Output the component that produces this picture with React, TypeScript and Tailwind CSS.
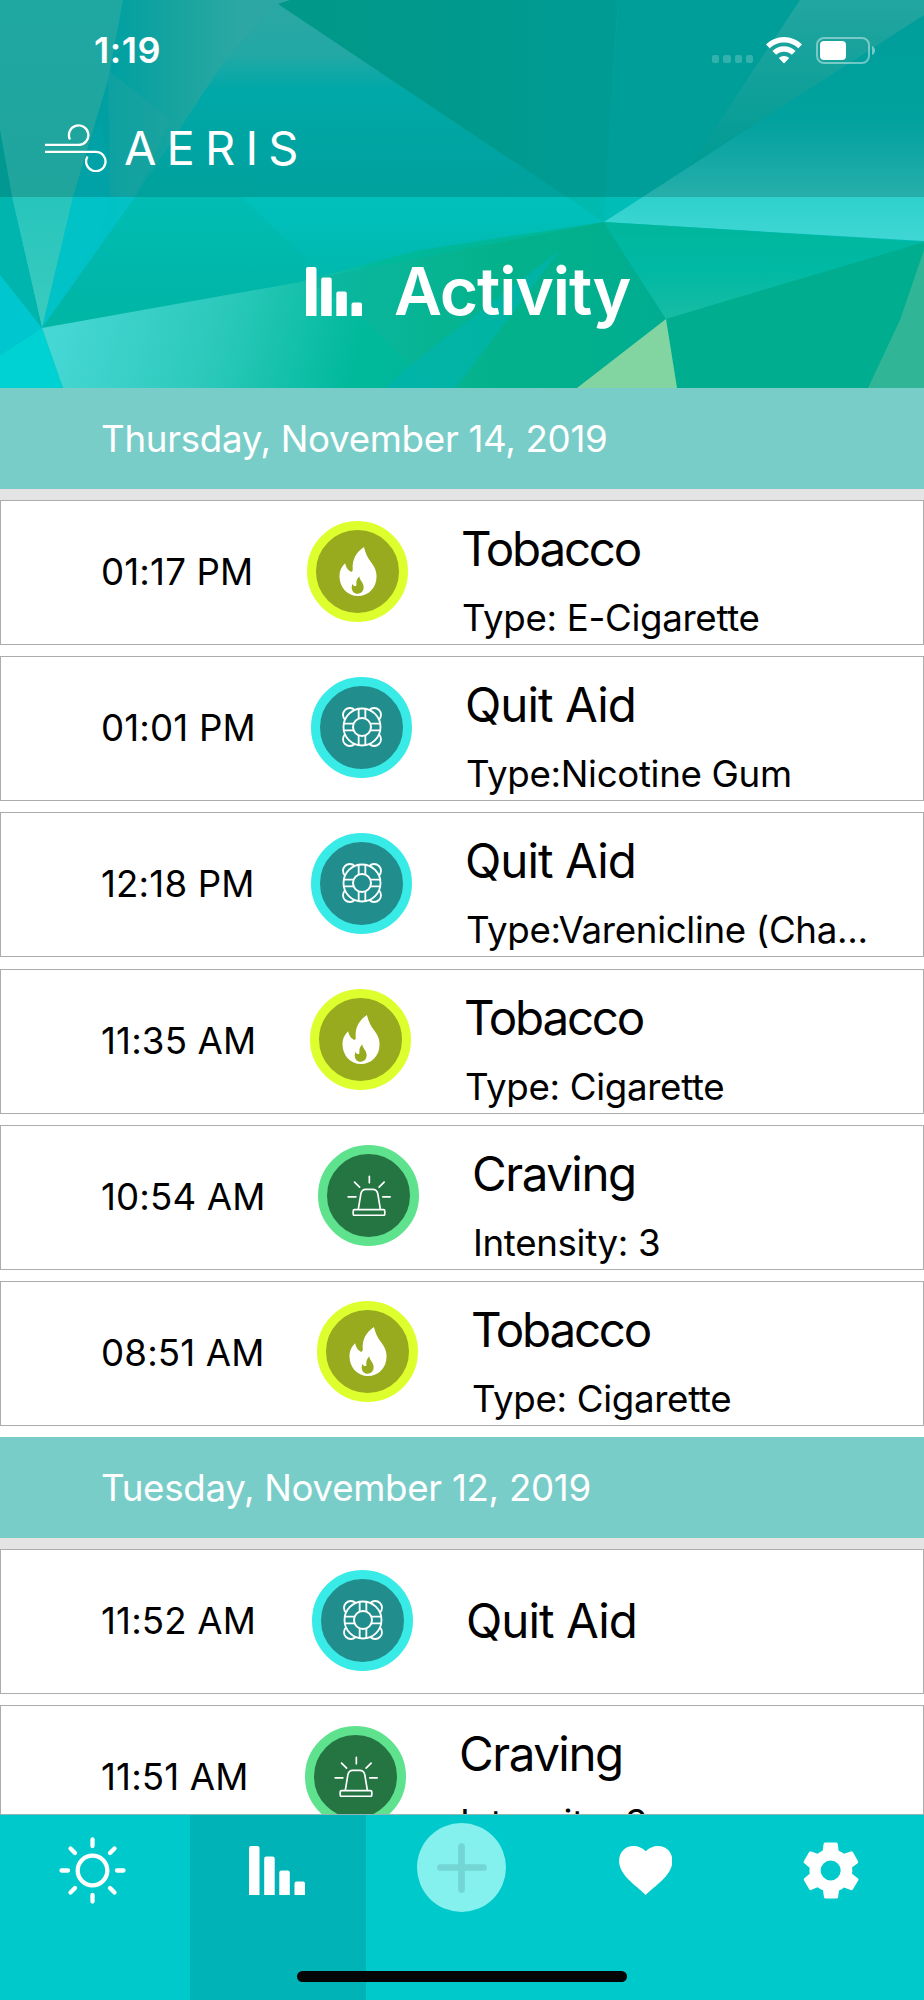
import type { ReactNode } from 'react';
import { clsx } from 'clsx';

type EntryKind = 'tobacco' | 'quitAid' | 'craving';

interface Entry {
  time: string;
  kind: EntryKind;
  detail?: string;
  timeWidth: string;
}

interface Day {
  date: string;
  entries: Entry[];
}

const days: Day[] = [
  {
    date: 'Thursday, November 14, 2019',
    entries: [
      { time: '01:17 PM', kind: 'tobacco', detail: 'Type: E-Cigarette', timeWidth: 'w-[206px]' },
      { time: '01:01 PM', kind: 'quitAid', detail: 'Type:Nicotine Gum', timeWidth: 'w-[210px]' },
      { time: '12:18 PM', kind: 'quitAid', detail: 'Type:Varenicline (Cha...', timeWidth: 'w-[210px]' },
      { time: '11:35 AM', kind: 'tobacco', detail: 'Type: Cigarette', timeWidth: 'w-[209px]' },
      { time: '10:54 AM', kind: 'craving', detail: 'Intensity: 3', timeWidth: 'w-[217px]' },
      { time: '08:51 AM', kind: 'tobacco', detail: 'Type: Cigarette', timeWidth: 'w-[216px]' },
    ],
  },
  {
    date: 'Tuesday, November 12, 2019',
    entries: [
      { time: '11:52 AM', kind: 'quitAid', timeWidth: 'w-[211px]' },
      { time: '11:51 AM', kind: 'craving', detail: 'Intensity: 3', timeWidth: 'w-[204px]' },
    ],
  },
];

function FlameIcon() {
  return (
    <svg viewBox="0 0 114 148" className="h-[49px] w-[38px]">
      <path
        fill="white"
        d="M75 0C79 16 85 32 97 47C106 59 113 71 113 89C113 124 88 148 57 148C26 148 1 122 1 88C1 72 7 59 18 49C20 58 25 69 34 74C39 76 42 73 41 66C39 38 52 15 75 0Z"
      />
      <path
        fill="#98ab1f"
        d="M61 89C62 101 75 108 74 123C73 134 66 141 56 141C45 141 38 133 38 122C38 118 39 114 41 111C42 117 46 119 50 118C53 117 52 113 52 108C52 101 55 94 61 89Z"
      />
    </svg>
  );
}

function LifebuoyIcon() {
  return (
    <svg viewBox="0 0 120 120" className="size-10" fill="none" stroke="white" strokeWidth="5.500">
      <circle cx="60" cy="60" r="55.500" />
      <circle cx="60" cy="60" r="27" strokeWidth="6" />
      <path d="M50 5V35M70 5V35M50 85V115M70 85V115M5 50H35M5 70H35M85 50H115M85 70H115" />
      <path d="M9 38A18 18 0 1 1 38 9M82 9A18 18 0 1 1 111 38M9 82A18 18 0 1 0 38 111M82 111A18 18 0 1 0 111 82" />
    </svg>
  );
}

function SirenIcon() {
  return (
    <svg viewBox="0 0 130 122" className="h-[41px] w-[44px]" fill="none" stroke="white" strokeWidth="5">
      <path d="M33 103L41 55C43 47 48 43 55 43H76C84 43 89 47 91 55L99 103" />
      <rect x="18" y="103" width="94" height="17" rx="4" />
      <path strokeLinecap="round" d="M66 4V23M22 21L37 36M110 21L95 36M3 65H26M106 65H128" />
    </svg>
  );
}

interface KindStyle {
  label: string;
  circle: string;
  tracking: string;
  icon: ReactNode;
}

const kinds: Record<EntryKind, KindStyle> = {
  tobacco: {
    label: 'Tobacco',
    circle: 'border-[#deff2e] bg-[#98ab1f]',
    tracking: 'tracking-[-0.046em]',
    icon: <FlameIcon />,
  },
  quitAid: {
    label: 'Quit Aid',
    circle: 'border-[#38ebe7] bg-[#218e8d]',
    tracking: 'tracking-[-0.020em]',
    icon: <LifebuoyIcon />,
  },
  craving: {
    label: 'Craving',
    circle: 'border-[#5fe28e] bg-[#257543]',
    tracking: 'tracking-[-0.031em]',
    icon: <SirenIcon />,
  },
};

function BarsIcon() {
  return (
    <svg viewBox="0 0 56 49" className="h-[49px] w-[56px]" fill="white">
      <path d="M0 49V2Q0 0 2 0H8.500Q10.500 0 10.500 2V49ZM15.200 49V12.500Q15.200 10.500 17.200 10.500H23.700Q25.700 10.500 25.700 12.500V49ZM30.300 49V26.500Q30.300 24.500 32.300 24.500H38.800Q40.800 24.500 40.800 26.500V49ZM45.500 49V37.500Q45.500 35.500 47.500 35.500H54Q56 35.500 56 37.500V49Z" />
    </svg>
  );
}

function Backdrop() {
  return (
    <svg viewBox="0 0 924 388" className="absolute inset-0 h-[388px] w-[924px]" preserveAspectRatio="none">
      <defs>
        <linearGradient id="sky" x1="0" y1="0" x2="0" y2="1">
          <stop offset="0" stopColor="#34c8c5" />
          <stop offset=".14" stopColor="#2ac9c5" />
          <stop offset=".23" stopColor="#00c9c8" />
          <stop offset=".55" stopColor="#00bfba" />
          <stop offset=".75" stopColor="#00b6aa" />
          <stop offset="1" stopColor="#00b698" />
        </linearGradient>
        <linearGradient id="left" gradientUnits="userSpaceOnUse" x1="110" y1="60" x2="240" y2="60">
          <stop offset="0" stopColor="#00bfc1" />
          <stop offset=".5" stopColor="#1cc4be" />
          <stop offset="1" stopColor="#35c8c4" />
        </linearGradient>
        <linearGradient id="low" gradientUnits="userSpaceOnUse" x1="60" y1="310" x2="400" y2="395">
          <stop offset="0" stopColor="#46d7d4" />
          <stop offset=".45" stopColor="#2cc9bb" />
          <stop offset=".85" stopColor="#00b99b" />
          <stop offset="1" stopColor="#00b799" />
        </linearGradient>
        <linearGradient id="dark" x1="0" y1="0" x2="1" y2="0">
          <stop offset="0" stopColor="#00b6a2" />
          <stop offset=".5" stopColor="#00b7a8" />
          <stop offset="1" stopColor="#00bab1" />
        </linearGradient>
        <linearGradient id="right" x1="0" y1="0" x2="0" y2="1">
          <stop offset="0" stopColor="#00bdb9" />
          <stop offset=".45" stopColor="#00c0bd" />
          <stop offset=".8" stopColor="#2ed0cb" />
          <stop offset="1" stopColor="#40d7d4" />
        </linearGradient>
        <linearGradient id="mid" x1="0" y1="0" x2="1" y2="0">
          <stop offset="0" stopColor="#0cb8a2" />
          <stop offset=".55" stopColor="#03b28b" />
          <stop offset="1" stopColor="#00ad91" />
        </linearGradient>
        <linearGradient id="facet" x1="0" y1="0" x2="0" y2="1">
          <stop offset="0" stopColor="#00b69c" />
          <stop offset=".5" stopColor="#00b9a5" />
          <stop offset="1" stopColor="#18bca2" />
        </linearGradient>
        <linearGradient id="streak" x1="0" y1="0" x2="0" y2="1">
          <stop offset="0" stopColor="#34c8c2" />
          <stop offset="1" stopColor="#00b9ae" />
        </linearGradient>
        <linearGradient id="shard" x1="0" y1="0" x2="0" y2="1">
          <stop offset="0" stopColor="#25c7c1" />
          <stop offset=".6" stopColor="#27c5bc" />
          <stop offset="1" stopColor="#3bcbc0" />
        </linearGradient>
      </defs>
      <rect width="924" height="388" fill="url(#sky)" />
      <path fill="#00b7a5" d="M135 197H242L312 265L300 290L42 328Z" opacity=".4" />
      <path fill="url(#left)" d="M123 0H279L225 60L135 197L42 328L73 197Z" />
      <path fill="#00c3c8" d="M73 197L100 120L110 170L110 197L100 240L42 328Z" opacity=".8" />
      <path fill="#00c3c8" d="M110 197H135L42 328L100 240Z" opacity=".6" />
      <path fill="#2cc4bd" d="M108 70L170 120L135 197L110 197Z" opacity=".4" />
      <path fill="url(#shard)" d="M0 0H123L108 80L73 197L42 328L12 197L0 130Z" />
      <path fill="#00b5ad" d="M0 130L12 197L42 328L0 275Z" />
      <path fill="#00c7cf" d="M0 275L42 328L0 355Z" />
      <path fill="#00d1d2" d="M0 355L42 328L63 388H0Z" />
      <path fill="url(#low)" d="M42 328L300 282L420 250L604 222L577 388H63Z" />
      <path fill="url(#mid)" d="M306 280Q450 252 604 222L666 319L577 388H433L360 315Z" />
      <path fill="#00b4aa" d="M385 388L410 365L560 250L500 330L455 388Z" opacity=".8" />
      <path fill="url(#dark)" d="M278 4L290 0H618L604 222Z" />
      <path fill="#00bdb7" d="M618 0H924V15L604 222Z" />
      <path fill="url(#streak)" d="M800 0H924V15L690 166Z" opacity=".8" />
      <path fill="url(#right)" d="M924 15V241L604 222Z" />
      <path fill="url(#facet)" d="M604 222L924 242L666 319Z" />
      <path fill="#00ae8f" d="M666 319L924 242V388H677Z" />
      <path fill="#30b597" d="M924 250V388H868L900 320Z" />
      <path fill="#82d4a1" d="M666 319L677 388H577Z" />
    </svg>
  );
}

function StatusBar() {
  return (
    <div className="flex h-[100px] items-center justify-between pr-[49px] pl-[94px]">
      <span className="text-[36px] font-semibold tracking-[0.015em]">1:19</span>
      <div className="flex items-center">
        <div className="mt-[18px] mr-[13px] flex gap-1">
          {[0, 1, 2, 3].map((dot) => (
            <span key={dot} className="size-[7.200px] rounded-[2px] bg-white/20" />
          ))}
        </div>
        <svg viewBox="0 0 36 27" className="mr-[14px] h-[27px] w-[36px]" fill="white">
          <path d="M18 0C25 0 31 2.800 36 7.500L32.300 11.300C28.400 7.500 23.500 5.500 18 5.500S7.600 7.500 3.700 11.300L0 7.500C5 2.800 11 0 18 0Z" />
          <path d="M18 9.300C22.500 9.300 26.500 11 29.600 14L25.800 17.700C23.700 15.800 21 14.700 18 14.700S12.300 15.800 10.200 17.700L6.400 14C9.500 11 13.500 9.300 18 9.300Z" />
          <path d="M18 19C20 19 21.800 19.700 23.200 21L18 26.500L12.800 21C14.200 19.700 16 19 18 19Z" />
        </svg>
        <svg viewBox="0 0 59 27" className="h-[27px] w-[59px]">
          <rect x="1" y="1" width="52" height="25" rx="7" fill="none" stroke="white" strokeWidth="2" opacity=".42" />
          <rect x="4" y="4" width="26" height="19" rx="4" fill="white" />
          <path d="M56 9Q59 10.500 59 13.500T56 18Z" fill="white" opacity=".45" />
        </svg>
      </div>
    </div>
  );
}

function Header() {
  return (
    <header className="relative h-[388px] shrink-0 text-white">
      <Backdrop />
      <div className="relative h-[197px] bg-black/16">
        <StatusBar />
        <div className="flex h-[95px] items-center pl-[45px]">
          <svg viewBox="0 0 62 48" className="h-12 w-[62px]" fill="none" stroke="white" strokeWidth="2.300">
            <path d="M0 20.800H34A9.700 9.700 0 1 0 25 15.500" />
            <path d="M0 27.800H51A9.700 9.700 0 1 1 42.500 32.500" />
          </svg>
          <h1 className="pt-[1px] pl-[17px] text-[47px] tracking-[0.216em]">AERIS</h1>
        </div>
      </div>
      <div className="relative flex h-[191px] items-center pb-[2px] pl-[306px]">
        <BarsIcon />
        <h2 className="pl-[32px] text-[66px] font-semibold tracking-[-0.018em]">Activity</h2>
      </div>
    </header>
  );
}

function EntryRow({ entry }: { entry: Entry }) {
  const kind = kinds[entry.kind];

  return (
    <li className="mb-[11.200px] flex h-[145px] border border-[#acacac] bg-white pl-[100px] text-black">
      <span className={clsx('shrink-0 self-center pb-[2px] text-[36.700px] tracking-[0.004em]', entry.timeWidth)}>
        {entry.time}
      </span>
      <div
        className={clsx(
          'mt-[19.500px] flex size-[101px] shrink-0 items-center justify-center rounded-full border-[9px]',
          kind.circle,
        )}
      >
        {kind.icon}
      </div>
      <div className={clsx('pl-[53px] whitespace-nowrap', entry.detail ? 'pt-[19px]' : 'self-center pb-[2px]')}>
        <p className={clsx('text-[47.500px] leading-[57px]', kind.tracking)}>{kind.label}</p>
        {entry.detail && (
          <p className="mt-[18px] pl-[1px] text-[36.700px] leading-[45px] tracking-[-0.009em]">{entry.detail}</p>
        )}
      </div>
    </li>
  );
}

function DaySection({ day }: { day: Day }) {
  return (
    <section>
      <h3 className="flex h-[101px] items-center bg-[#79cdc8] pl-[101px] text-[36.700px] tracking-[-0.008em] text-white">
        {day.date}
      </h3>
      <ul>
        <li className="h-[11px] bg-[#e4e4e4]" />
        {day.entries.map((entry) => (
          <EntryRow key={entry.time} entry={entry} />
        ))}
      </ul>
    </section>
  );
}

function TabBar() {
  return (
    <nav className="relative grid h-[185px] shrink-0 grid-cols-[190px_176px_191px_176px_191px] bg-[#00c9cb]">
      <div className="flex justify-center pt-[22px] pr-[6px]">
        <svg viewBox="0 0 67 67" className="size-[67px]" fill="none" stroke="white" strokeWidth="4.300" strokeLinecap="round">
          <circle cx="33.500" cy="33.500" r="14.800" />
          <path d="M33.500 2.500V9M33.500 58V64.500M2.500 33.500H9M58 33.500H64.500M11.500 11.500L16 16M51 51L55.500 55.500M11.500 55.500L16 51M51 16L55.500 11.500" />
        </svg>
      </div>
      <div className="flex justify-center bg-[#00b3b7] pt-[31px] pr-[2px]">
        <BarsIcon />
      </div>
      <div className="flex justify-center pt-2">
        <svg viewBox="0 0 89 89" className="size-[89px]">
          <circle cx="44.500" cy="44.500" r="44.500" fill="#84f1ef" />
          <path d="M44.500 23.500V66.500M23.500 44.500H66.500" stroke="#74d6d4" strokeWidth="6.700" strokeLinecap="round" />
        </svg>
      </div>
      <div className="flex justify-center pt-[31px] pl-[1px]">
        <svg viewBox="0 0 160 147" className="h-[49px] w-[53.500px]" fill="white">
          <path d="M80 147C62 126 0 91 0 45C0 18 19 0 43 0C58 0 70 6 80 16C90 6 102 0 117 0C141 0 160 18 160 45C160 91 98 126 80 147Z" />
        </svg>
      </div>
      <div className="flex justify-center pt-[27px] pl-[4px]">
        <svg viewBox="1205 125 168 170" className="h-[57px] w-[56px]" fill="white" fillRule="evenodd">
          <path d="M1270 126H1306L1309 129L1312 151Q1320 154 1328 160L1350 152L1354 154L1371 184L1369 188L1352 201Q1354 211 1352 220L1371 235V239L1354 268L1350 269L1328 261Q1321 267 1313 270L1310 292L1307 294H1271L1268 291L1265 269Q1256 266 1249 260L1227 269L1224 267L1207 238L1208 234L1225 220Q1224 211 1225 202L1207 187V183L1223 155L1227 152L1249 160Q1256 154 1264 151L1267 129ZM1288 180A30 30 0 1 0 1288 240A30 30 0 1 0 1288 180Z" />
        </svg>
      </div>
      {/* home indicator */}
      <div className="absolute bottom-[18px] left-[297px] h-[11px] w-[330px] rounded-full bg-[#050505]" />
    </nav>
  );
}

export default function App() {
  return (
    <div className="flex h-[2000px] w-[924px] flex-col overflow-hidden bg-white font-['Inter',sans-serif]">
      <Header />
      <main className="min-h-0 flex-1 overflow-hidden border-b border-[#8fb5b5]">
        {days.map((day) => (
          <DaySection key={day.date} day={day} />
        ))}
      </main>
      <TabBar />
    </div>
  );
}
